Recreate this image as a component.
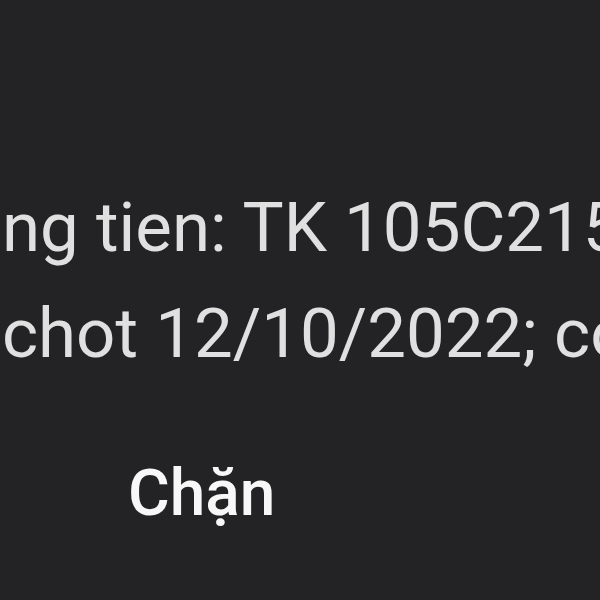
export default function App() {
  return (
    <div
      className="h-[600px] w-[600px] overflow-hidden bg-[#232326] text-[#e0e0e0]"
      style={{ fontFamily: "Roboto, 'Noto Sans', sans-serif" }}
    >
      {/* tin nhắn bị cắt ở hai bên */}
      <div className="pt-[175px] pl-[2px]">
        <p className="whitespace-nowrap text-[69px] leading-[106px]">
          ng tien: TK 105C215830
        </p>
        <p className="whitespace-nowrap text-[69px] leading-[106px]">
          chot 12/10/2022; con lai
        </p>
      </div>

      <div className="pt-[75px] pl-[128px]">
        <span className="text-[64px] font-medium leading-none text-[#f7f7f7]">
          Chặn
        </span>
      </div>
    </div>
  );
}
